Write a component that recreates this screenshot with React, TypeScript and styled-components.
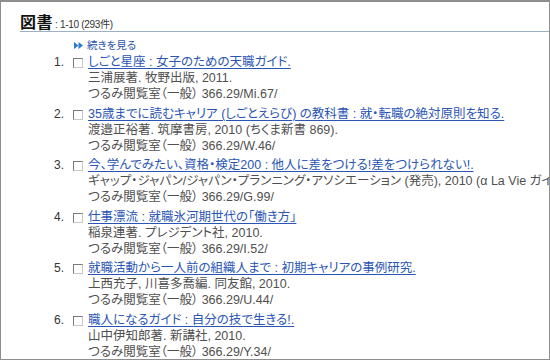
import React from 'react';
import styled, { createGlobalStyle } from 'styled-components';

const GlobalStyle = createGlobalStyle`
  html, body {
    margin: 0;
    padding: 0;
    background: #ffffff;
  }
  body {
    font-family: "Liberation Sans", "Noto Sans CJK JP", sans-serif;
    font-feature-settings: "palt";
  }
`;

const Frame = styled.div`
  width: 550px;
  height: 360px;
  box-sizing: border-box;
  border: 1px solid #8e8e8e;
  border-top-width: 2px;
  padding: 13px 0 0 19px;
  overflow: hidden;
  background: #fff;
`;

const Header = styled.div`
  display: flex;
  align-items: baseline;
  height: 15px;
  padding-bottom: 1px;
  border-bottom: 1px solid #9cb1c6;
  line-height: 15px;
`;

const HeaderTitle = styled.span`
  font-size: 16px;
  font-weight: 700;
  color: #111;
  letter-spacing: 0.5px;
`;

const HeaderCount = styled.span`
  font-size: 10px;
  color: #333;
  margin-left: 2px;
  letter-spacing: -0.3px;
`;

const MoreRow = styled.div`
  display: flex;
  align-items: center;
  gap: 4px;
  margin: 6px 0 0 54px;
  height: 14px;
`;

const MoreLink = styled.a`
  font-size: 10.5px;
  color: #2a55a8;
  text-decoration: none;
  line-height: 14px;
`;

const List = styled.ol`
  list-style: none;
  margin: 2px 0 0 0;
  padding: 0;
`;

const Item = styled.li`
  display: grid;
  grid-template-columns: 44px 9px 1fr;
  column-gap: 9px;
  margin-bottom: 3.5px;
  font-size: 12.5px;
  line-height: 16px;
  white-space: nowrap;
`;

const Num = styled.div`
  text-align: right;
  color: #333;
  font-size: 12px;
`;

const Check = styled.span`
  width: 8px;
  height: 8px;
  margin-top: 4px;
  border: 1px solid #7a7a7a;
  border-right-color: #c8c8c8;
  border-bottom-color: #c8c8c8;
  background: #fff;
  box-sizing: content-box;
`;

const Body = styled.div`
  display: flex;
  flex-direction: column;
  margin-left: -3px;
  min-width: 0;
`;

const Title = styled.a`
  display: inline-block;
  align-self: flex-start;
  height: 16px;
  color: #2a55b5;
  text-decoration: underline;
  text-underline-offset: 2px;
  text-decoration-thickness: 1px;
`;

const Line = styled.div`
  height: 16px;
  color: #505050;
`;

interface Book {
  title: string;
  author: string;
  location: string;
}

const books: Book[] = [
  {
    title: 'しごと星座 : 女子のための天職ガイド.',
    author: '三浦展著. 牧野出版, 2011.',
    location: 'つるみ閲覧室（一般） 366.29/Mi.67/',
  },
  {
    title: '35歳までに読むキャリア (しごとえらび) の教科書 : 就・転職の絶対原則を知る.',
    author: '渡邉正裕著. 筑摩書房, 2010 (ちくま新書 869).',
    location: 'つるみ閲覧室（一般） 366.29/W.46/',
  },
  {
    title: '今、学んでみたい、資格・検定200 : 他人に差をつける!差をつけられない!.',
    author: 'ギャップ・ジャパン/ジャパン・プランニング・アソシエーション (発売), 2010 (α La Vie ガイドブック)',
    location: 'つるみ閲覧室（一般） 366.29/G.99/',
  },
  {
    title: '仕事漂流 : 就職氷河期世代の「働き方」',
    author: '稲泉連著. プレジデント社, 2010.',
    location: 'つるみ閲覧室（一般） 366.29/I.52/',
  },
  {
    title: '就職活動から一人前の組織人まで : 初期キャリアの事例研究.',
    author: '上西充子, 川喜多喬編. 同友館, 2010.',
    location: 'つるみ閲覧室（一般） 366.29/U.44/',
  },
  {
    title: '職人になるガイド : 自分の技で生きる!.',
    author: '山中伊知郎著. 新講社, 2010.',
    location: 'つるみ閲覧室（一般） 366.29/Y.34/',
  },
];

const MoreIcon = () => (
  <svg width="9" height="7" viewBox="0 0 9 7">
    <path d="M0 0 L4.5 3.5 L0 7 Z" fill="#2a7ad0" />
    <path d="M4.5 0 L9 3.5 L4.5 7 Z" fill="#2a7ad0" />
  </svg>
);

const App: React.FC = () => (
  <>
    <GlobalStyle />
    <Frame>
      <Header>
        <HeaderTitle>図書</HeaderTitle>
        <HeaderCount>: 1-10 (293件)</HeaderCount>
      </Header>
      <MoreRow>
        <MoreIcon />
        <MoreLink href="#">続きを見る</MoreLink>
      </MoreRow>
      <List>
        {books.map((b, i) => (
          <Item key={i}>
            <Num>{i + 1}.</Num>
            <Check />
            <Body>
              <Title href="#">{b.title}</Title>
              <Line>{b.author}</Line>
              <Line>{b.location}</Line>
            </Body>
          </Item>
        ))}
      </List>
    </Frame>
  </>
);

export default App;
